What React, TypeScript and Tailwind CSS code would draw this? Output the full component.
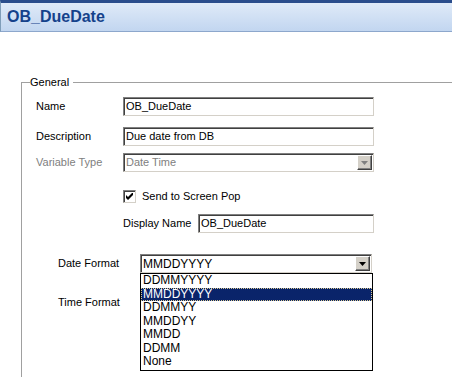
import React from 'react';

const sunken =
  'border border-t-[#808080] border-l-[#808080] border-r-[#d4d0c8] border-b-[#d4d0c8] shadow-[inset_1px_1px_0_#404040] bg-white';

function DropButton({ disabled }: { disabled?: boolean }) {
  return (
    <div className="w-[15px] h-[15px] bg-[#d4d0c8] border border-t-white border-l-white border-r-[#404040] border-b-[#404040] shadow-[inset_-1px_-1px_0_#808080] flex items-center justify-center">
      <svg width="7" height="4" viewBox="0 0 7 4">
        <path d="M0 0h7L3.5 4z" fill={disabled ? '#808080' : '#000'} />
      </svg>
    </div>
  );
}

function TextBox({ value, width }: { value: string; width: string }) {
  return (
    <div className={`${sunken} ${width} h-[19px] flex items-center pl-[2px] text-[11px] text-black`}>
      {value}
    </div>
  );
}

const formats = ['DDMMYYYY', 'MMDDYYYY', 'DDMMYY', 'MMDDYY', 'MMDD', 'DDMM', 'None'];

export default function App() {
  return (
    <div className="w-[452px] h-[377px] overflow-hidden bg-white font-['Liberation_Sans',Arial,sans-serif] text-black">
      {/* title bar */}
      <div className="h-[32px] border-t-[3px] border-t-[#2a4d8c] border-l border-l-[#7f9db9] border-b border-b-[#8da7cc] bg-gradient-to-b from-[#dfeaf8] to-[#c2d6f0] flex items-center pl-[6px]">
        <span className="text-[16px] font-bold text-[#15428b] leading-none">OB_DueDate</span>
      </div>

      <fieldset className="ml-[21px] mt-[44px] w-[600px] h-[400px] border-l border-t border-[#a0a0a0] pl-[8px] relative">
        <legend className="text-[11px] leading-[13px] pr-[4px]">General</legend>

        <div className="flex items-center mt-[8px] h-[19px]">
          <div className="w-[93px] pl-[6px] text-[11px]">Name</div>
          <TextBox value="OB_DueDate" width="w-[251px]" />
        </div>

        <div className="flex items-center mt-[11px] h-[19px]">
          <div className="w-[93px] pl-[6px] text-[11px]">Description</div>
          <TextBox value="Due date from DB" width="w-[251px]" />
        </div>

        <div className="flex items-center mt-[7px] h-[19px]">
          <div className="w-[93px] pl-[6px] text-[11px] text-[#808080]">Variable Type</div>
          <div className={`${sunken} w-[251px] h-[19px] flex items-center justify-between pl-[2px] pr-[1px] text-[11px] text-[#808080]`}>
            <span>Date Time</span>
            <DropButton disabled />
          </div>
        </div>

        <div className="flex items-center mt-[18px] h-[13px] pl-[93px]">
          <div className={`${sunken} w-[13px] h-[13px] flex items-center justify-center`}>
            <svg width="7" height="7" viewBox="0 0 7 7">
              <path d="M0 2v3l2 2 5-5V-1L2 4z" fill="#000" />
            </svg>
          </div>
          <span className="ml-[6px] text-[11px]">Send to Screen Pop</span>
        </div>

        <div className="flex items-center mt-[11px] h-[19px] pl-[93px]">
          <div className="w-[75px] text-[11px]">Display Name</div>
          <TextBox value="OB_DueDate" width="w-[176px]" />
        </div>

        <div className="flex items-center mt-[21px] h-[19px] relative">
          <div className="w-[110px] pl-[28px] text-[11px]">Date Format</div>
          <div className={`${sunken} w-[232px] h-[19px] flex items-center justify-between pl-[2px] pr-[1px] text-[12px]`}>
            <span>MMDDYYYY</span>
            <DropButton />
          </div>
          {/* open dropdown list */}
          <div className="absolute left-[110px] top-[19px] w-[233px] border border-black bg-white z-10 pb-[1px]">
            {formats.map((f) => (
              <div
                key={f}
                className={
                  f === 'MMDDYYYY'
                    ? 'h-[13.5px] leading-[11.5px] text-[12px] pl-[1px] bg-[#0a246a] text-white border border-dotted border-[#d8c890]'
                    : 'h-[13.5px] leading-[13.5px] text-[12px] pl-[2px]'
                }
              >
                {f}
              </div>
            ))}
          </div>
        </div>

        <div className="flex items-center mt-[20px] h-[19px]">
          <div className="w-[110px] pl-[28px] text-[11px]">Time Format</div>
        </div>
      </fieldset>
    </div>
  );
}
